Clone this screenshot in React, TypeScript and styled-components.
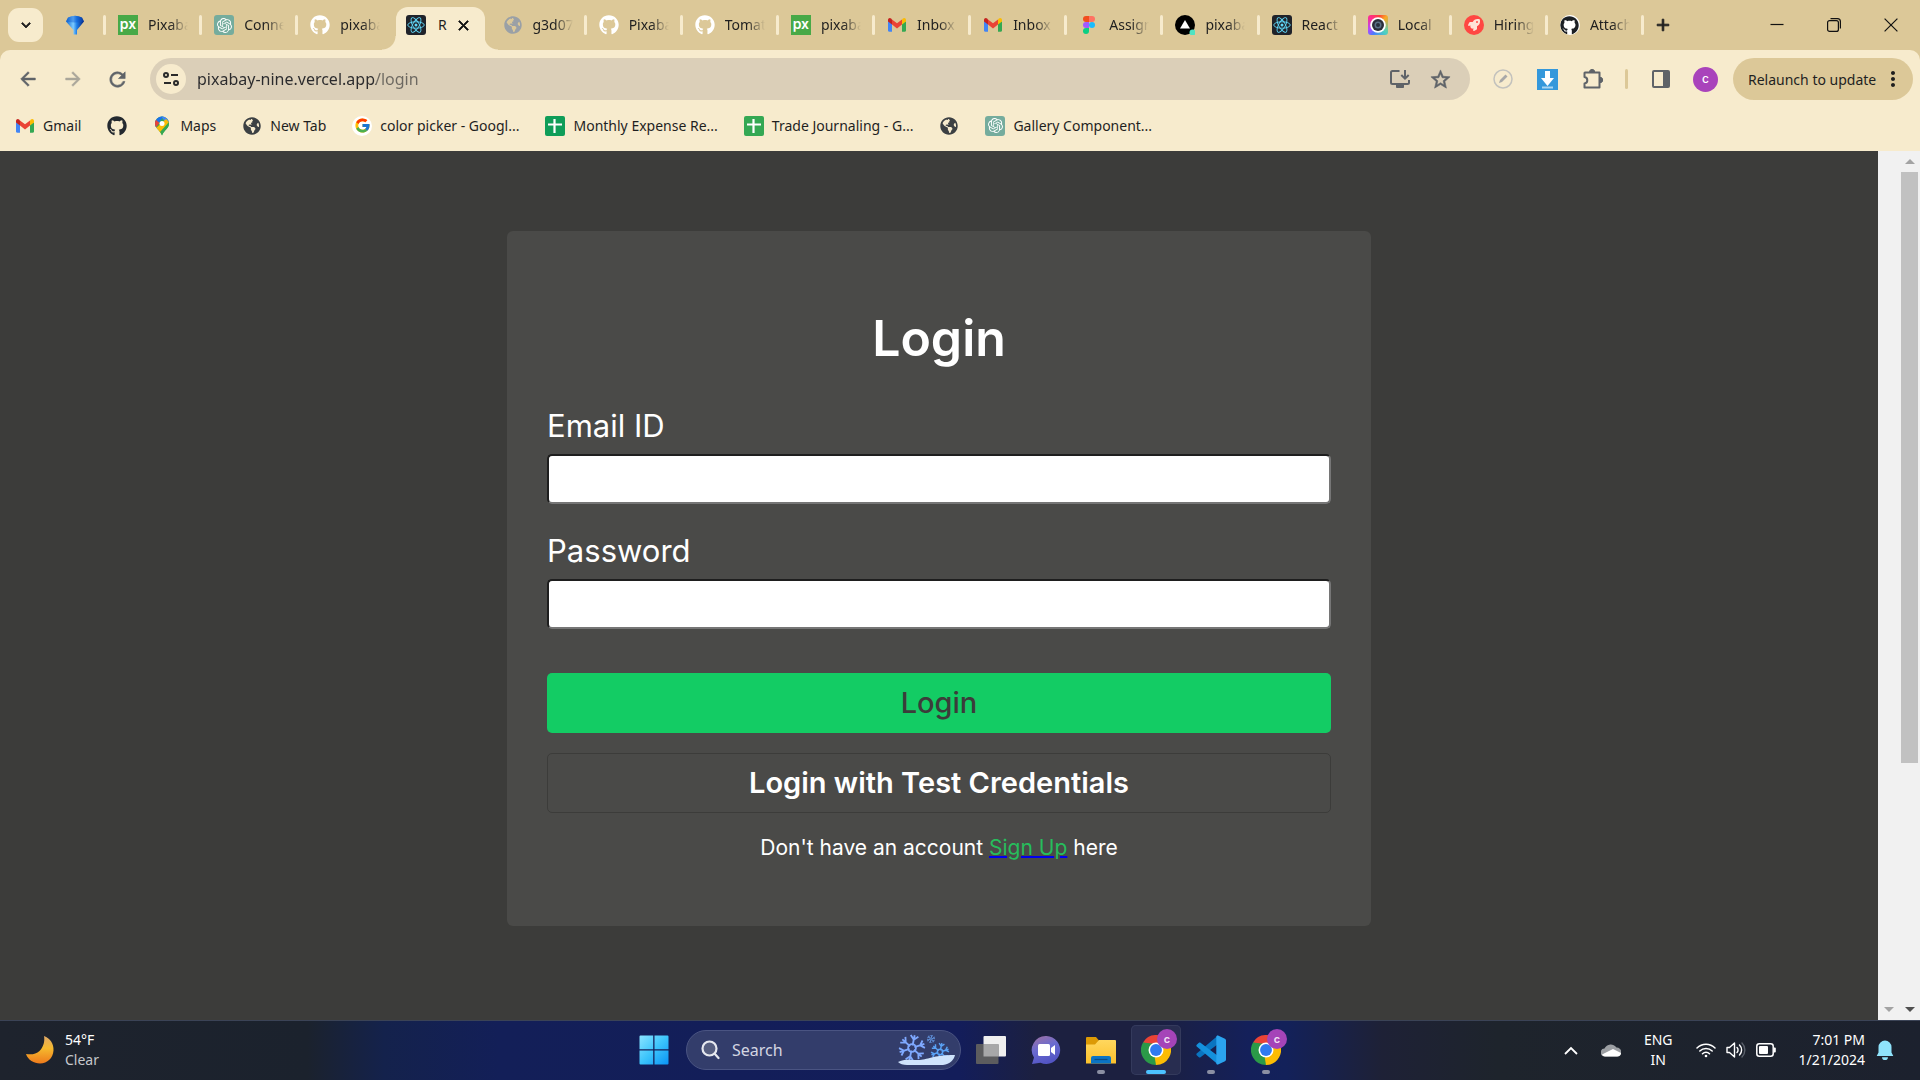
import React from "react";
import styled, { createGlobalStyle, css } from "styled-components";
import {
  MdArrowBack,
  MdArrowForward,
  MdRefresh,
  MdStarOutline,
  MdExpandMore,
  MdMoreVert,
  MdClose,
  MdAdd,
} from "react-icons/md";
import { FaGithub, FaGlobeAmericas, FaRocket } from "react-icons/fa";
import { SiOpenai } from "react-icons/si";
import { FcGoogle } from "react-icons/fc";

const color = {
  strip: "#dcc898",
  toolbar: "#f7ebcd",
  omnibox: "#dbcfb8",
  ink: "#1f1f1f",
  icon: "#5f6368",
  page: "#3c3c3a",
  card: "#4a4a48",
  green: "#13cc64",
};

const uiFont = `"Noto Sans", "Open Sans", sans-serif`;
const pageFont = `Inter, "Noto Sans", sans-serif`;

const GlobalStyle = createGlobalStyle`
  *, *::before, *::after { box-sizing: border-box; }
  body { margin: 0; font-family: ${uiFont}; font-size: 14px; color: ${color.ink}; }
  button { font: inherit; color: inherit; border: 0; padding: 0; background: none; cursor: pointer; }
  svg { display: block; flex: none; }
`;

const Screen = styled.div`
  display: flex;
  flex-direction: column;
  height: 100vh;
  overflow: hidden;
  background: ${color.strip};
`;

/* ---------- Tab strip ---------- */

const TabStrip = styled.div`
  display: flex;
  align-items: center;
  height: 50px;
  flex: none;
  padding-right: 1px;
`;

const boldGlyph = css`
  & path:not([fill="none"]) {
    stroke: currentColor;
    stroke-width: 1px;
  }
`;

const TabSearch = styled.button`
  display: grid;
  place-items: center;
  width: 35px;
  height: 34px;
  margin-left: 8px;
  border-radius: 11px;
  background: ${color.toolbar};
  ${boldGlyph}
`;

const separator = css`
  &::after {
    content: "";
    width: 3px;
    height: 20px;
    flex: none;
    margin-left: auto;
    border-radius: 2px;
    background: ${color.toolbar};
  }
`;

const PinnedTab = styled.button`
  display: flex;
  align-items: center;
  width: 63px;
  padding-left: 22px;
  ${separator}
`;

const TabList = styled.div`
  display: flex;
  flex: 1;
  min-width: 0;
  height: 100%;
`;

const TabItem = styled.div<{ $active?: boolean; $separated?: boolean }>`
  position: relative;
  display: flex;
  align-items: center;
  flex: 1 1 0;
  min-width: 0;
  padding-left: 12px;
  ${(p) => p.$separated && separator}
  ${(p) =>
    p.$active &&
    css`
      &::before {
        content: "";
        position: absolute;
        z-index: 0;
        inset: 7px 0 0 -12px;
        width: calc(100% + 19px);
        background:
          radial-gradient(circle at 0 0, transparent 13px, ${color.toolbar} 14px) left bottom / 14px 14px no-repeat,
          radial-gradient(circle at 100% 0, transparent 13px, ${color.toolbar} 14px) right bottom / 14px 14px no-repeat;
      }
      &::after {
        content: "";
        position: absolute;
        inset: 7px 6px 0 2px;
        border-radius: 12px 12px 0 0;
        background: ${color.toolbar};
      }
    `}
`;

const TabButton = styled.button`
  position: relative;
  z-index: 1;
  display: flex;
  align-items: center;
  gap: 10px;
  min-width: 0;
`;

const TabTitle = styled.span`
  width: 40px;
  overflow: hidden;
  white-space: nowrap;
  text-align: left;
  line-height: 20px;
  mask-image: linear-gradient(90deg, #000 55%, transparent 100%);
`;

const ActiveTitle = styled.span`
  width: 12px;
  line-height: 20px;
`;

const CloseTab = styled.button`
  position: relative;
  z-index: 1;
  display: grid;
  place-items: center;
  width: 20px;
  height: 20px;
  margin-left: 5px;
  color: #111;
  ${boldGlyph}
`;

const NewTab = styled.button`
  display: grid;
  place-items: center;
  width: 38px;
  height: 34px;
  ${boldGlyph}
`;

const WindowButtons = styled.div`
  display: flex;
  margin-left: 66px;
`;

const WindowButton = styled.button`
  display: grid;
  place-items: center;
  width: 57px;
  height: 50px;
`;

/* ---------- Toolbar ---------- */

const BrowserBar = styled.header`
  flex: none;
  border-radius: 10px 10px 0 0;
  background: ${color.toolbar};
`;

const Toolbar = styled.div`
  display: flex;
  align-items: center;
  height: 58px;
  padding: 0 7px 0 5px;
`;

const ToolButton = styled.button<{ $dim?: boolean; $wide?: number; $bold?: boolean }>`
  display: grid;
  place-items: center;
  width: ${(p) => p.$wide ?? 45}px;
  height: 40px;
  color: ${color.icon};
  opacity: ${(p) => (p.$dim ? 0.5 : 1)};
  & path:not([fill="none"]) {
    ${(p) => p.$bold && "stroke: currentColor; stroke-width: 0.6px;"}
  }
`;

const Omnibox = styled.div`
  display: flex;
  align-items: center;
  flex: 1;
  min-width: 0;
  height: 42px;
  margin: 0 10px;
  padding: 0 10px 0 6px;
  border-radius: 21px;
  background: ${color.omnibox};
`;

const SiteInfo = styled.button`
  display: grid;
  place-items: center;
  flex: none;
  width: 30px;
  height: 30px;
  border-radius: 50%;
  background: ${color.toolbar};
`;

const Address = styled.input`
  flex: 1;
  min-width: 0;
  margin-left: 11px;
  padding: 0;
  border: 0;
  outline: 0;
  font: 16px/24px ${uiFont};
  color: transparent;
  background: linear-gradient(90deg, #2a2a2c 179px, #6c6860 179px);
  background-clip: text;
`;

const ToolDivider = styled.span`
  width: 3px;
  height: 20px;
  margin: 0 10px;
  border-radius: 2px;
  background: ${color.strip};
`;

const Avatar = styled.span`
  display: grid;
  place-items: center;
  width: 25px;
  height: 25px;
  border-radius: 50%;
  background: #a943bb;
  color: #fff;
  font: 500 12px/14px ${pageFont};
`;

const Relaunch = styled.button`
  display: flex;
  align-items: center;
  justify-content: space-between;
  width: 180px;
  height: 42px;
  margin-left: 5px;
  padding: 0 8px 0 15px;
  border-radius: 21px;
  background: ${color.strip};
  white-space: nowrap;
`;

const Bookmarks = styled.nav`
  display: flex;
  align-items: center;
  gap: 26px;
  height: 43px;
  padding: 0 15px 8px;
`;

const Bookmark = styled.a`
  display: flex;
  align-items: center;
  gap: 8px;
  height: 20px;
  color: ${color.ink};
  text-decoration: none;
  white-space: nowrap;
`;

const Badge = styled.span<{ $bg: string; $fg?: string; $radius?: string }>`
  display: grid;
  place-items: center;
  flex: none;
  width: 20px;
  height: 20px;
  overflow: hidden;
  border-radius: ${(p) => p.$radius ?? "3px"};
  background: ${(p) => p.$bg};
  color: ${(p) => p.$fg ?? "#fff"};
`;

const PxText = styled.span`
  font: 600 14px/16px ${pageFont};
  padding-bottom: 2px;
`;

/* ---------- Login page ---------- */

const Viewport = styled.div`
  display: flex;
  flex: 1;
  min-height: 0;
  background: ${color.page};
`;

const Page = styled.main`
  flex: 1;
  min-width: 0;
  padding-top: 80px;
  overflow: hidden;
  font-family: ${pageFont};
  color: #fff;
`;

const Card = styled.form`
  display: flex;
  flex-direction: column;
  width: 46%;
  min-width: 480px;
  margin: 0 auto;
  padding: 77px 40px 65px;
  border-radius: 6px;
  background: ${color.card};
`;

const Title = styled.h1`
  margin: 0 0 39px;
  font-size: 50px;
  font-weight: 600;
  line-height: 60px;
  text-align: center;
`;

const Field = styled.div`
  display: flex;
  flex-direction: column;
  gap: 9px;
  margin-bottom: 28px;
`;

const FieldLabel = styled.label`
  font-size: 31px;
  line-height: 38px;
`;

const FieldInput = styled.input`
  height: 50px;
  padding: 0 10px;
  border: 2px solid;
  border-color: #1e1e1e #767676 #767676 #1e1e1e;
  border-radius: 5px;
  background: #fff;
  font: 20px/24px ${pageFont};
`;

const Actions = styled.div`
  display: flex;
  flex-direction: column;
  gap: 20px;
  margin-top: 16px;
`;

const ActionButton = styled.button<{ $primary?: boolean }>`
  height: 60px;
  border-radius: 5px;
  font-size: 29px;
  line-height: 36px;
  ${(p) =>
    p.$primary
      ? css`
          background: ${color.green};
          color: ${color.page};
          font-weight: 500;
        `
      : css`
          border: 1px solid ${color.page};
          color: #fff;
          font-weight: 600;
        `}
`;

const SignUpLine = styled.p`
  margin: 22px 0 0;
  font-size: 21px;
  line-height: 26px;
  text-align: center;
`;

const SignUpLink = styled.a`
  color: #27bd5c;
  text-decoration: underline 2px #0000ee;
`;

const ScrollColumn = styled.div<{ $width: number }>`
  display: flex;
  flex-direction: column;
  align-items: center;
  width: ${(p) => p.$width}px;
  background: #f1f1f1;
`;

const ScrollArrow = styled.span<{ $up?: boolean; $dark?: boolean }>`
  display: grid;
  place-items: center;
  height: 21px;
  &::before {
    content: "";
    border: 5px solid transparent;
    ${(p) => (p.$up ? "border-top-width: 0" : "border-bottom-width: 0")};
    ${(p) => (p.$up ? "border-bottom-color" : "border-top-color")}: ${(p) => (p.$dark ? "#505050" : "#a3a3a3")};
  }
`;

const ScrollTrack = styled.div`
  flex: 1;
  width: 17px;
`;

const ScrollThumb = styled.div`
  height: 71.5%;
  background: #c1c1c1;
`;

/* ---------- Taskbar ---------- */

const Taskbar = styled.footer`
  display: grid;
  grid-template-columns: 1fr auto 1fr;
  align-items: center;
  flex: none;
  height: 60px;
  padding-bottom: 1px;
  border-top: 1px solid #3b4356;
  background: linear-gradient(
    90deg,
    #1e232d 0%,
    #1b222d 16%,
    #14224c 20%,
    #131f58 26%,
    #131d5a 50%,
    #1c2040 54%,
    #1c2040 60%,
    #14205a 65%,
    #13215a 67%,
    #1e2136 72%,
    #1e242c 78%,
    #1c212e 100%
  );
  color: #fff;
`;

const Weather = styled.button`
  display: flex;
  align-items: center;
  justify-self: start;
  gap: 10px;
  padding-left: 25px;
  text-align: left;
  line-height: 20px;
`;

const Stack = styled.span`
  display: flex;
  flex-direction: column;
`;

const Muted = styled.span`
  color: #c6c8cc;
`;

const TaskIcons = styled.div`
  display: flex;
  align-items: center;
  gap: 5px;
`;

const TaskButton = styled.button<{ $active?: boolean; $running?: boolean }>`
  position: relative;
  display: grid;
  place-items: center;
  width: 50px;
  height: 50px;
  border-radius: 5px;
  ${(p) => p.$active && "background: #282d50; box-shadow: inset 0 0 0 1px #343a5c;"}
  ${(p) =>
    (p.$active || p.$running) &&
    css`
      &::after {
        content: "";
        position: absolute;
        bottom: 1px;
        left: 50%;
        translate: -50% 0;
        width: ${p.$active ? 20 : 8}px;
        height: 4px;
        border-radius: 2px;
        background: ${p.$active ? "#4cc2ff" : "#8b8fa3"};
      }
    `}
`;

const ProfileDot = styled.span`
  position: absolute;
  top: 4px;
  right: 4px;
  display: grid;
  place-items: center;
  width: 20px;
  height: 20px;
  border-radius: 50%;
  background: #a544b8;
  color: #f0dff3;
  font: 600 11px/12px ${pageFont};
`;

const SearchBox = styled.label`
  display: flex;
  align-items: center;
  width: 275px;
  height: 40px;
  margin-left: 2px;
  padding: 0 5px 0 14px;
  border: 1px solid #4a5482;
  border-radius: 20px;
  background: #333d6b;
`;

const SearchInput = styled.input`
  flex: 1;
  min-width: 0;
  margin-left: 12px;
  padding: 0;
  border: 0;
  outline: 0;
  background: none;
  color: #fff;
  font: 16px/22px ${uiFont};
  &::placeholder {
    color: #d3d6e2;
    opacity: 1;
  }
`;

const Tray = styled.div`
  display: flex;
  align-items: center;
  justify-self: end;
  padding-right: 26px;
  line-height: 20px;
`;

const TrayButton = styled.button<{ $gap?: number }>`
  display: flex;
  align-items: center;
  gap: 10px;
  margin-left: ${(p) => p.$gap ?? 0}px;
`;

const Language = styled(Stack)`
  align-items: center;
`;

const Clock = styled(Stack)`
  align-items: flex-end;
`;

/* ---------- Drawings ---------- */

const ReactMark = () => (
  <Badge $bg="#20232a">
    <svg width="18" height="18" viewBox="-12 -12 24 24" fill="none" stroke="#61dafb" strokeWidth="1.2">
      <circle r="2" fill="#61dafb" stroke="none" />
      <ellipse rx="11" ry="4.3" />
      <ellipse rx="11" ry="4.3" transform="rotate(60)" />
      <ellipse rx="11" ry="4.3" transform="rotate(120)" />
    </svg>
  </Badge>
);

const OpenAiMark = () => (
  <Badge $bg="#75ac9d">
    <SiOpenai size={15} />
  </Badge>
);

const PixabayMark = () => (
  <Badge $bg="#48a947" $radius="0">
    <PxText>px</PxText>
  </Badge>
);

const GlobeMark = ({ fill }: { fill: string }) => (
  <Badge $bg="transparent" $fg={fill}>
    <FaGlobeAmericas size={18} />
  </Badge>
);

const GmailMark = () => (
  <svg width="20" height="20" viewBox="0 0 20 20">
    <path d="M1 6v9.500c0 .8.6 1.200 1.300 1.200H5V8.500z" fill="#4285f4" />
    <path d="M19 6v9.500c0 .8-.6 1.200-1.300 1.200H15V8.500z" fill="#34a853" />
    <path d="M15 4.500V9.600l4-3V5c0-1.900-1.900-2.600-3.100-1.500z" fill="#fbbc04" />
    <path d="M5 9.600V4.500l5 3.800 5-3.800v5.100l-5 3.800z" fill="#ea4335" />
    <path d="M1 5v1.600l4 3V4.500L4.100 3.500C2.900 2.400 1 3.100 1 5z" fill="#c5221f" />
  </svg>
);

const FigmaMark = () => (
  <svg width="20" height="20" viewBox="0 0 20 20">
    <path d="M7 1h3v6H7a3 3 0 0 1 0-6z" fill="#f24e1e" />
    <path d="M10 1h3a3 3 0 0 1 0 6h-3z" fill="#ff7262" />
    <path d="M7 7h3v6H7a3 3 0 0 1 0-6z" fill="#a259ff" />
    <circle cx="13" cy="10" r="3" fill="#1abcfe" />
    <path d="M7 13h3v3a3 3 0 1 1-3-3z" fill="#0acf83" />
  </svg>
);

const VercelMark = () => (
  <svg width="20" height="20" viewBox="0 0 20 20">
    <circle cx="10" cy="10" r="10" />
    <path d="M10 5l5 8.600H5z" fill="#fff" />
    <circle cx="17.500" cy="17.500" r="3" fill="#50e3c2" />
  </svg>
);

const LensMark = () => (
  <Badge $bg="conic-gradient(from 45deg, #f9a825, #4cd2c0 25%, #4a7dff 45%, #b04bff 55%, #ff2d8d 75%, #ff4136 90%, #f9a825)">
    <svg width="16" height="16" viewBox="0 0 16 16">
      <circle cx="8" cy="8" r="7.800" fill="#fff" />
      <circle cx="8" cy="8" r="6" fill="#2b2f3a" />
      <circle cx="8" cy="8" r="3.500" fill="#5a7186" />
      <circle cx="8" cy="8" r="2" fill="#27303c" />
    </svg>
  </Badge>
);

const RocketMark = () => (
  <Badge $bg="#ff4742" $radius="50%" $fg="#ffe3d6">
    <FaRocket size={12} />
  </Badge>
);

const GithubFramed = () => (
  <Badge $bg="#fff" $radius="50%" $fg="#1b1f24">
    <FaGithub size={19} />
  </Badge>
);

const DiamondMark = () => (
  <svg width="20" height="20" viewBox="0 0 20 20">
    <defs>
      <linearGradient id="gem" x1="0" x2="1">
        <stop offset="0" stopColor="#0b63d0" />
        <stop offset=".4" stopColor="#7ccbff" />
        <stop offset=".6" stopColor="#1f7fe8" />
        <stop offset="1" stopColor="#041f78" />
      </linearGradient>
    </defs>
    <path d="M3 2.500Q10-1 17 2.500L19 6.500 12 15v4.500H8.500V15L1 6.500z" fill="url(#gem)" />
    <path d="M3 2.500Q10-1 17 2.500L19 6.500Q10 8.500 1 6.500z" fill="#0a56d0" opacity=".4" />
  </svg>
);

const MapsMark = () => (
  <svg width="19" height="20" viewBox="0 0 19 20">
    <defs>
      <clipPath id="pin">
        <path d="M9 .5a7 7 0 0 1 7 7c0 5-4.800 6.500-7 12-2.200-5.500-7-7-7-12a7 7 0 0 1 7-7z" />
      </clipPath>
    </defs>
    <g clipPath="url(#pin)">
      <path d="M0 0h20v20H0z" fill="#34a853" />
      <path d="M0 0h11L2 12H0z" fill="#1a73e8" />
      <path d="M2 3l4.500 4-5 6H0z" fill="#ea4335" />
      <path d="M8 0h9v6h-5z" fill="#4285f4" />
      <path d="M13 3l4 4L7 19 2 13z" fill="#fbbc04" />
      <path d="M17 5L7 16l2 4h10z" fill="#34a853" />
    </g>
    <circle cx="9" cy="7.500" r="2.500" fill="#fff" />
  </svg>
);

const SheetsMark = ({ fill }: { fill: string }) => (
  <svg width="20" height="20" viewBox="0 0 20 20">
    <rect width="20" height="20" rx="2" fill={fill} />
    <path d="M9.500 3v14M3 8.500h14" stroke="#fff" strokeWidth="2.200" />
  </svg>
);

const TuneMark = () => (
  <svg width="16" height="14" viewBox="0 0 16 14" fill="none" stroke="#2a2a2a" strokeWidth="2">
    <circle cx="3" cy="3" r="2" />
    <path d="M8 3h7M1 11h7" />
    <circle cx="13" cy="11" r="2" />
  </svg>
);

const InstallMark = () => (
  <svg width="22" height="20" viewBox="0 0 22 20" fill="none" stroke="#5f6368" strokeWidth="2">
    <path d="M10.500 2H3.500A1.500 1.500 0 0 0 2 3.500v10A1.500 1.500 0 0 0 3.500 15h15a1.500 1.500 0 0 0 1.500-1.500V11" />
    <path d="M16 1v8M12.300 6l3.700 3.700L19.700 6" />
    <path d="M7.500 15.500h7v3h-7z" fill="#5f6368" strokeWidth="1" />
  </svg>
);

const BlockedMark = () => (
  <svg width="20" height="20" viewBox="0 0 20 20" fill="none">
    <circle cx="10" cy="10" r="9" stroke="#c3c2bd" strokeWidth="1.500" />
    <path d="M6 14l1-3 5.500-5.500 2 2L9 13z" fill="#a8a8a8" />
  </svg>
);

const DownloadMark = () => (
  <svg width="21" height="21" viewBox="0 0 21 21">
    <rect width="21" height="21" fill="#3498db" />
    <path d="M8 2h5v7h4l-6.500 8L4 9h4z" fill="#fff" />
    <path d="M5 18.500h11" stroke="#a9d6f3" strokeWidth="2" />
  </svg>
);

const PuzzleMark = () => (
  <svg width="22" height="22" viewBox="0 0 22 22">
    <path
      d="M3 4.500h14.500V19.500H2.500V15.500c1.800-.2 2.800-1.600 2.800-3.200S4.200 9.200 2.500 9V5z"
      fill="none"
      stroke="#5f6368"
      strokeWidth="2"
      strokeLinejoin="round"
    />
    <path d="M7.500 4a2.600 2.600 0 0 1 5.200 0zM18 9.300a2.700 2.700 0 0 1 0 5.400z" fill="#5f6368" stroke="#5f6368" />
  </svg>
);

const SidePanelMark = () => (
  <svg width="18" height="18" viewBox="0 0 18 18">
    <rect x="1" y="1" width="16" height="16" rx="1" fill="none" stroke="#5f6368" strokeWidth="2" />
    <path d="M11 1h6v16h-6z" fill="#5f6368" />
  </svg>
);

const WindowGlyph = ({ kind }: { kind: "min" | "restore" | "close" }) => (
  <svg width="14" height="14" viewBox="0 0 14 14" fill="none" stroke="#111" strokeWidth="1.200">
    {kind === "min" && <path d="M.5 6.500h13" />}
    {kind === "restore" && (
      <>
        <rect x=".6" y="2.600" width="10.800" height="10.800" rx="2" />
        <path d="M3.500.7H10.500A2.900 2.900 0 0 1 13.400 3.600V10.500" />
      </>
    )}
    {kind === "close" && <path d="M.6.6l12.800 12.800M13.400.6L.6 13.400" />}
  </svg>
);

const MoonIcon = () => (
  <svg width="30" height="30" viewBox="0 0 30 30">
    <defs>
      <linearGradient id="moon" x1="0" y1="0" x2="0" y2="1">
        <stop offset="0" stopColor="#e0a868" />
        <stop offset=".45" stopColor="#f5b92e" />
        <stop offset="1" stopColor="#ee7a1c" />
      </linearGradient>
    </defs>
    <path d="M19 1c6 2 10 8 9.500 14.500C28 23 22.500 28.500 15 28.500 9 28.500 3 25 1 19c5 .8 10 .5 13.500-3C18.500 12 20 6 19 1z" fill="url(#moon)" />
  </svg>
);

const WindowsIcon = () => (
  <svg width="30" height="30" viewBox="0 0 30 30">
    <defs>
      <linearGradient id="win" x1="0" y1="0" x2="1" y2="1">
        <stop offset="0" stopColor="#8be4ff" />
        <stop offset=".5" stopColor="#3cc4fb" />
        <stop offset="1" stopColor="#0a93f5" />
      </linearGradient>
    </defs>
    <path d="M.5 1.500a1 1 0 0 1 1-1H14.200v13.700H.5zM15.500.5h13a1 1 0 0 1 1 1v12.700h-14zM.5 15.500h13.700v14H1.500a1 1 0 0 1-1-1zM15.500 15.500h14v13a1 1 0 0 1-1 1h-13z" fill="url(#win)" />
  </svg>
);

const MagnifierIcon = () => (
  <svg width="19" height="20" viewBox="0 0 19 20" fill="none" stroke="#e6e8ef" strokeWidth="2.200" strokeLinecap="round">
    <circle cx="8.500" cy="8.500" r="7" fill="#565e80" />
    <path d="M13.500 13.500l4 4.500" />
  </svg>
);

const Flake = ({ x, y, r, stroke, w }: { x: number; y: number; r: number; stroke: string; w: number }) => (
  <g transform={`translate(${x} ${y}) scale(${r / 10})`} stroke={stroke} strokeWidth={w} fill="none">
    <circle r="3" />
    {[0, 60, 120, 180, 240, 300].map((a) => (
      <path key={a} d="M0-2V-10M-3-9.500L0-6.500 3-9.500" transform={`rotate(${a + 12})`} />
    ))}
  </g>
);

const SnowIcon = () => (
  <svg width="58" height="32" viewBox="0 0 58 32">
    <Flake x={15} y={14} r={13} stroke="#7fa9ff" w={1.4} />
    <Flake x={34} y={5} r={4} stroke="#5f8fd8" w={2.2} />
    <Flake x={43} y={18} r={9} stroke="#5aa2f5" w={1.6} />
    <path d="M1 28c6-3.500 13-2 20-2 10 0 14-5 37-5-1 5-5 9-12 10H10c-4 0-7-1-9-3z" fill="#cfe3fb" />
  </svg>
);

const TaskViewIcon = () => (
  <svg width="30" height="30" viewBox="0 0 30 30">
    <rect x="7.500" y="1" width="22.500" height="20.500" rx="1" fill="#efefef" />
    <rect y="9" width="22.500" height="20" rx="1" fill="#5c5c5e" />
    <path d="M7.500 9h15v12.500h-15z" fill="#a7a7a8" />
  </svg>
);

const ChatIcon = () => (
  <svg width="30" height="30" viewBox="0 0 30 30">
    <defs>
      <linearGradient id="chat" x1="0" y1="0" x2=".4" y2="1">
        <stop offset="0" stopColor="#a2719f" />
        <stop offset=".5" stopColor="#6a6bd0" />
        <stop offset="1" stopColor="#5355c4" />
      </linearGradient>
    </defs>
    <path d="M15.500 1a14 14 0 1 1-6 26.800L1 29l2-6.500A14 14 0 0 1 15.500 1z" fill="url(#chat)" />
    <rect x="7" y="9" width="12" height="12" rx="1.500" fill="#fff" />
    <path d="M20 13l4-3v10l-4-3z" fill="#fff" />
  </svg>
);

const ExplorerIcon = () => (
  <svg width="30" height="30" viewBox="0 0 30 30">
    <defs>
      <linearGradient id="folder" x1="0" y1="0" x2="0" y2="1">
        <stop offset="0" stopColor="#ffd75e" />
        <stop offset="1" stopColor="#fcc12c" />
      </linearGradient>
    </defs>
    <path d="M0 3a1 1 0 0 1 1-1h9l3 3.500v5H0z" fill="#dc9a05" />
    <path d="M0 9.500h9L13 5h16a1 1 0 0 1 1 1v22.500H0z" fill="url(#folder)" />
    <path d="M5 28.500V23a2 2 0 0 1 2-2h16a2 2 0 0 1 2 2v5.500z" fill="#0b74c4" />
    <path d="M8.500 24.500h13" stroke="#0a4c86" strokeWidth="1.200" />
  </svg>
);

const ChromeIcon = () => (
  <svg width="30" height="30" viewBox="0 0 48 48">
    <path d="M24 24L3.200 12A24 24 0 0 1 44.800 12L34 14z" fill="#ea4335" />
    <path d="M24 24L44.800 12A24 24 0 0 1 24 48L20 40z" fill="#fbbc04" />
    <path d="M24 24L24 48A24 24 0 0 1 3.200 12L12 14z" fill="#2b9a48" />
    <path d="M24 12H44.800L34.400 18z" fill="#ea4335" />
    <path d="M34.400 30L24 48l-2-12z" fill="#fbbc04" />
    <path d="M13.600 30L3.200 12 20 14z" fill="#2b9a48" />
    <circle cx="24" cy="24" r="12" fill="#fff" />
    <circle cx="24" cy="24" r="9.500" fill="#2f7af0" />
  </svg>
);

const CodeIcon = () => (
  <svg width="30" height="30" viewBox="0 0 30 30">
    <path d="M22 .5L22 9 4.500 22.300c-.5.4-1.200.4-1.600 0L.7 20.200c-.5-.5-.5-1.300 0-1.700z" fill="#0a74c0" />
    <path d="M22 29.500V21L4.500 7.700c-.5-.4-1.200-.4-1.600 0L.7 9.800c-.5.500-.5 1.300 0 1.700z" fill="#1490dc" />
    <path d="M22 .5l7 3.200c.6.300 1 .9 1 1.500v19.600c0 .6-.4 1.200-1 1.500l-7 3.200c-.8.400-1.700-.3-1.700-1.200V1.700c0-.9.900-1.600 1.700-1.200z" fill="#2ba4ef" />
  </svg>
);

const ChevronIcon = () => (
  <svg width="14" height="9" viewBox="0 0 14 9" fill="none" stroke="#fff" strokeWidth="1.800">
    <path d="M1 8l6-6 6 6" />
  </svg>
);

const CloudIcon = () => (
  <svg width="20" height="14" viewBox="0 0 20 14">
    <path d="M4 13.500a4 4 0 0 1-.5-8A7 7 0 0 1 15.500 4.500a4.500 4.500 0 0 1 .5 9z" fill="#9c9fa3" />
    <path d="M1 11.500L12 6l8 4a3.800 3.800 0 0 1-3.500 3.500H4a4 4 0 0 1-3-2z" fill="#fff" />
  </svg>
);

const WifiIcon = () => (
  <svg width="20" height="16" viewBox="0 0 20 16" fill="none" stroke="#fff" strokeWidth="1.500" strokeLinecap="round">
    <path d="M1 6a12.700 12.700 0 0 1 18 0M3.800 9a8.800 8.800 0 0 1 12.400 0M6.500 11.800a5 5 0 0 1 7 0" />
    <circle cx="10" cy="14" r="1.300" fill="#fff" stroke="none" />
  </svg>
);

const SpeakerIcon = () => (
  <svg width="20" height="18" viewBox="0 0 20 18" fill="none" stroke="#fff" strokeWidth="1.400" strokeLinecap="round">
    <path d="M1 6.500h2.500L8.500 2v14L3.500 11.500H1z" strokeLinejoin="round" />
    <path d="M11 6.500a3.500 3.500 0 0 1 0 5M13.500 4a7 7 0 0 1 0 10" />
    <path d="M16 2a10 10 0 0 1 0 14" stroke="#5b606b" />
  </svg>
);

const BatteryIcon = () => (
  <svg width="20" height="14" viewBox="0 0 20 14">
    <rect x=".8" y=".8" width="16.400" height="12.400" rx="2.500" fill="none" stroke="#fff" strokeWidth="1.500" />
    <rect x="3" y="3" width="9" height="8" rx="1" fill="#fff" />
    <path d="M18 4.500h.8a1 1 0 0 1 1 1v3a1 1 0 0 1-1 1H18z" fill="#fff" />
  </svg>
);

const BellIcon = () => (
  <svg width="18" height="20" viewBox="0 0 18 20" fill="#8fe3fb">
    <path d="M9 .5a6.500 6.500 0 0 1 6.500 6.500v5.500L17.300 16H.7l1.800-3.500V7A6.500 6.500 0 0 1 9 .5zM6 17.200h6a3 3 0 0 1-6 0z" />
  </svg>
);

/* ---------- Data ---------- */

type Tab = { icon: React.ReactNode; title: string; active?: boolean; separated?: boolean };

const whiteGithub = <FaGithub size={20} color="#fff" />;

const tabs: Tab[] = [
  { icon: <PixabayMark />, title: "Pixaba", separated: true },
  { icon: <OpenAiMark />, title: "Conne", separated: true },
  { icon: whiteGithub, title: "pixaba" },
  { icon: <ReactMark />, title: "R", active: true },
  { icon: <GlobeMark fill="#9aa0a6" />, title: "g3d07", separated: true },
  { icon: whiteGithub, title: "Pixaba", separated: true },
  { icon: whiteGithub, title: "Tomat", separated: true },
  { icon: <PixabayMark />, title: "pixaba", separated: true },
  { icon: <GmailMark />, title: "Inbox", separated: true },
  { icon: <GmailMark />, title: "Inbox", separated: true },
  { icon: <FigmaMark />, title: "Assign", separated: true },
  { icon: <VercelMark />, title: "pixaba", separated: true },
  { icon: <ReactMark />, title: "React", separated: true },
  { icon: <LensMark />, title: "Local", separated: true },
  { icon: <RocketMark />, title: "Hiring", separated: true },
  { icon: <GithubFramed />, title: "Attach", separated: true },
];

const bookmarks: { icon: React.ReactNode; label?: string; name: string }[] = [
  { icon: <GmailMark />, label: "Gmail", name: "Gmail" },
  { icon: <FaGithub size={20} color="#24292f" />, name: "GitHub" },
  { icon: <MapsMark />, label: "Maps", name: "Maps" },
  { icon: <GlobeMark fill="#3c4043" />, label: "New Tab", name: "New Tab" },
  {
    icon: (
      <Badge $bg="#fff" $radius="50%">
        <FcGoogle size={17} />
      </Badge>
    ),
    label: "color picker - Googl...",
    name: "color picker",
  },
  { icon: <SheetsMark fill="#0f9d58" />, label: "Monthly Expense Re...", name: "Monthly Expense" },
  { icon: <SheetsMark fill="#34a853" />, label: "Trade Journaling - G...", name: "Trade Journaling" },
  { icon: <GlobeMark fill="#3c4043" />, name: "Saved page" },
  { icon: <OpenAiMark />, label: "Gallery Component...", name: "Gallery Component" },
];

export default function App() {
  return (
    <Screen>
      <GlobalStyle />
      <TabStrip>
        <TabSearch aria-label="Search tabs">
          <MdExpandMore size={18} />
        </TabSearch>
        <PinnedTab aria-label="Pinned tab">
          <DiamondMark />
        </PinnedTab>
        <TabList>
          {tabs.map((t, i) => (
            <TabItem key={i} $active={t.active} $separated={t.separated}>
              <TabButton>
                {t.icon}
                {t.active ? <ActiveTitle>{t.title}</ActiveTitle> : <TabTitle>{t.title}</TabTitle>}
              </TabButton>
              {t.active && (
                <CloseTab aria-label="Close tab">
                  <MdClose size={17} />
                </CloseTab>
              )}
            </TabItem>
          ))}
        </TabList>
        <NewTab aria-label="New tab">
          <MdAdd size={20} />
        </NewTab>
        <WindowButtons>
          <WindowButton aria-label="Minimize">
            <WindowGlyph kind="min" />
          </WindowButton>
          <WindowButton aria-label="Restore">
            <WindowGlyph kind="restore" />
          </WindowButton>
          <WindowButton aria-label="Close">
            <WindowGlyph kind="close" />
          </WindowButton>
        </WindowButtons>
      </TabStrip>

      <BrowserBar>
        <Toolbar>
          <ToolButton aria-label="Back" $bold>
            <MdArrowBack size={22} />
          </ToolButton>
          <ToolButton aria-label="Forward" $dim $bold>
            <MdArrowForward size={22} />
          </ToolButton>
          <ToolButton aria-label="Reload" $bold>
            <MdRefresh size={23} />
          </ToolButton>
          <Omnibox>
            <SiteInfo aria-label="Site information">
              <TuneMark />
            </SiteInfo>
            <Address aria-label="Address" defaultValue="pixabay-nine.vercel.app/login" spellCheck={false} />
            <ToolButton aria-label="Install" $wide={40}>
              <InstallMark />
            </ToolButton>
            <ToolButton aria-label="Bookmark" $wide={40} $bold>
              <MdStarOutline size={23} />
            </ToolButton>
          </Omnibox>
          <ToolButton aria-label="Blocker">
            <BlockedMark />
          </ToolButton>
          <ToolButton aria-label="Downloader">
            <DownloadMark />
          </ToolButton>
          <ToolButton aria-label="Extensions">
            <PuzzleMark />
          </ToolButton>
          <ToolDivider />
          <ToolButton aria-label="Side panel">
            <SidePanelMark />
          </ToolButton>
          <ToolButton>
            <Avatar>c</Avatar>
          </ToolButton>
          <Relaunch>
            Relaunch to update
            <MdMoreVert size={24} />
          </Relaunch>
        </Toolbar>
        <Bookmarks>
          {bookmarks.map((b, i) => (
            <Bookmark key={i} href="#" aria-label={b.name}>
              {b.icon}
              {b.label}
            </Bookmark>
          ))}
        </Bookmarks>
      </BrowserBar>

      <Viewport>
        <Page>
          <Card onSubmit={(e) => e.preventDefault()}>
            <Title>Login</Title>
            <Field>
              <FieldLabel htmlFor="email">Email ID</FieldLabel>
              <FieldInput id="email" type="email" />
            </Field>
            <Field>
              <FieldLabel htmlFor="password">Password</FieldLabel>
              <FieldInput id="password" type="password" />
            </Field>
            <Actions>
              <ActionButton type="submit" $primary>
                Login
              </ActionButton>
              <ActionButton type="button">Login with Test Credentials</ActionButton>
            </Actions>
            <SignUpLine>
              Don't have an account <SignUpLink href="#">Sign Up</SignUpLink> here
            </SignUpLine>
          </Card>
        </Page>
        <ScrollColumn $width={21}>
          <ScrollTrack />
          <ScrollArrow />
        </ScrollColumn>
        <ScrollColumn $width={21}>
          <ScrollArrow $up />
          <ScrollTrack>
            <ScrollThumb />
          </ScrollTrack>
          <ScrollArrow $dark />
        </ScrollColumn>
      </Viewport>

      <Taskbar>
        <Weather>
          <MoonIcon />
          <Stack>
            <span>54°F</span>
            <Muted>Clear</Muted>
          </Stack>
        </Weather>
        <TaskIcons>
          <TaskButton aria-label="Start">
            <WindowsIcon />
          </TaskButton>
          <SearchBox>
            <MagnifierIcon />
            <SearchInput aria-label="Search" placeholder="Search" />
            <SnowIcon />
          </SearchBox>
          <TaskButton aria-label="Task view">
            <TaskViewIcon />
          </TaskButton>
          <TaskButton aria-label="Chat">
            <ChatIcon />
          </TaskButton>
          <TaskButton aria-label="File Explorer" $running>
            <ExplorerIcon />
          </TaskButton>
          <TaskButton aria-label="Chrome" $active>
            <ChromeIcon />
            <ProfileDot>c</ProfileDot>
          </TaskButton>
          <TaskButton aria-label="Visual Studio Code" $running>
            <CodeIcon />
          </TaskButton>
          <TaskButton aria-label="Chrome, second window" $running>
            <ChromeIcon />
            <ProfileDot>c</ProfileDot>
          </TaskButton>
        </TaskIcons>
        <Tray>
          <TrayButton aria-label="Show hidden icons">
            <ChevronIcon />
          </TrayButton>
          <TrayButton aria-label="OneDrive" $gap={23}>
            <CloudIcon />
          </TrayButton>
          <TrayButton $gap={23}>
            <Language>
              <span>ENG</span>
              <span>IN</span>
            </Language>
          </TrayButton>
          <TrayButton aria-label="Network, volume and battery" $gap={23}>
            <WifiIcon />
            <SpeakerIcon />
            <BatteryIcon />
          </TrayButton>
          <TrayButton $gap={23}>
            <Clock>
              <span>7:01 PM</span>
              <span>1/21/2024</span>
            </Clock>
          </TrayButton>
          <TrayButton aria-label="Notifications" $gap={11}>
            <BellIcon />
          </TrayButton>
        </Tray>
      </Taskbar>
    </Screen>
  );
}
